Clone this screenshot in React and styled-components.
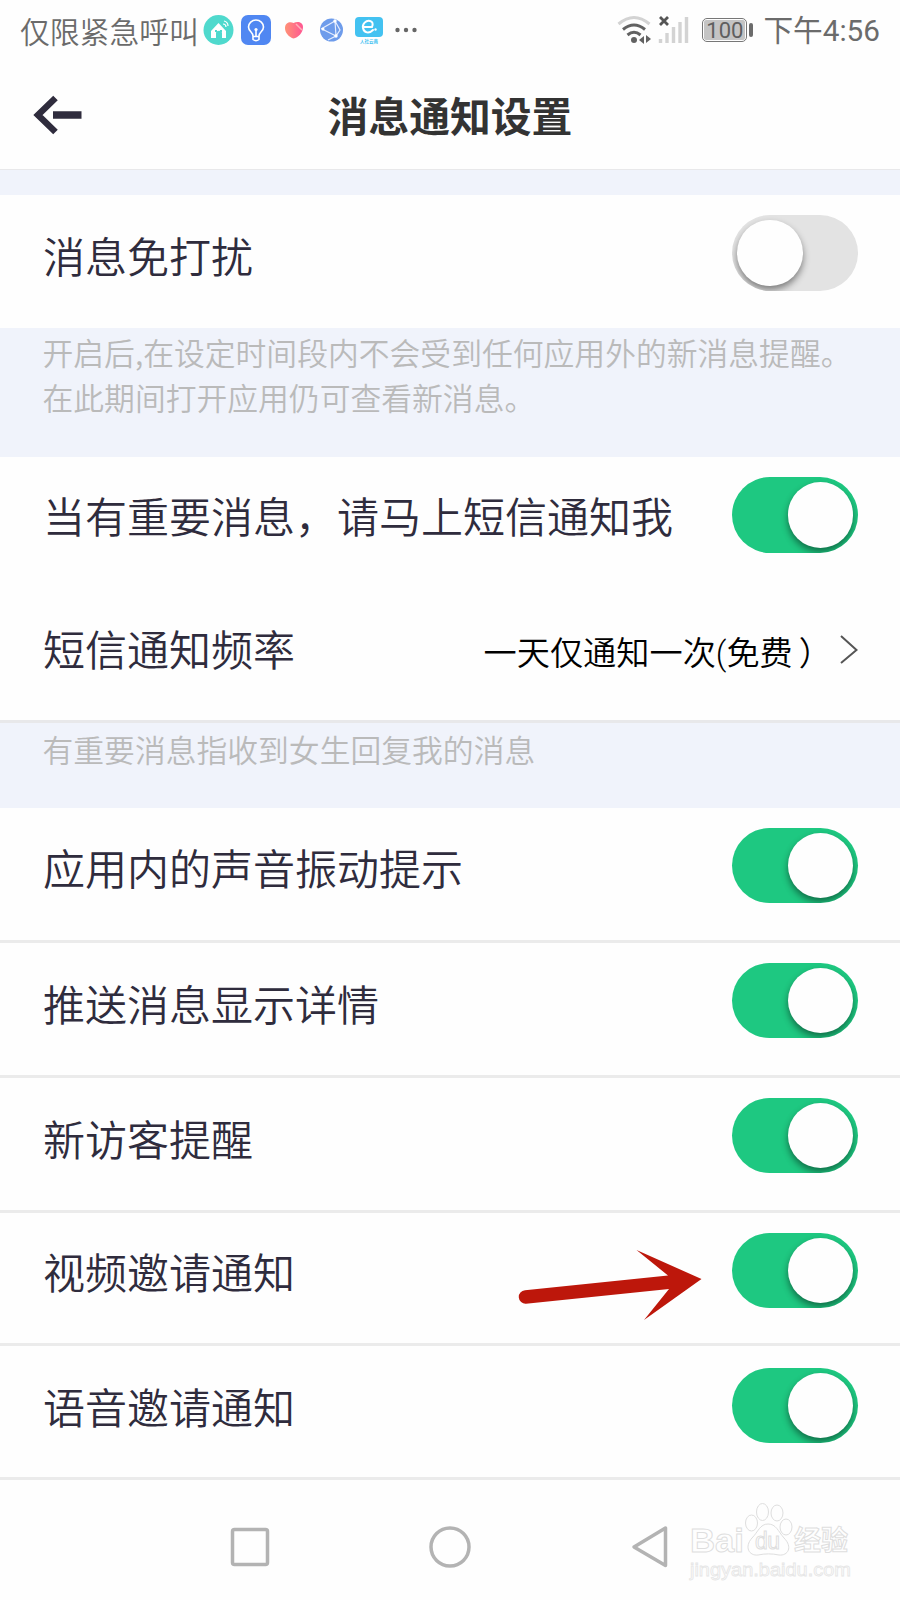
import React from 'react';
import styled, { createGlobalStyle } from 'styled-components';

const GlobalStyle = createGlobalStyle`
	* {
		box-sizing: border-box;
	}

	body {
		margin: 0;
		background-color: #fefefe;
		font-family: Roboto, 'Noto Sans CJK SC', sans-serif;
	}
`;

const Screen = styled.div`
	position: relative;
	display: flex;
	flex-direction: column;
	width: 900px;
	height: 1600px;
	overflow: hidden;
	background-color: #fefefe;
`;

const StatusBar = styled.div`
	display: flex;
	align-items: center;
	justify-content: space-between;
	height: 60px;
	padding: 0 20px;
	color: #6b6b6b;
	font-size: 30px;
	line-height: 60px;
	white-space: nowrap;
`;

const StatusGroup = styled.div`
	display: flex;
	align-items: center;
	height: 60px;
`;

const Carrier = styled.span`
	width: 180px;
	font-size: 29.8px;
	font-family: 'Noto Sans CJK SC', sans-serif;
	font-weight: 350;
`;

const Battery = styled.div`
	display: flex;
	align-items: center;
	margin: 0 10px 0 13px;

	&::after {
		content: '';
		width: 4px;
		height: 14px;
		margin-left: 2px;
		border-radius: 2px;
		background-color: #6b6b6b;
	}
`;

const BatteryLevel = styled.div`
	width: 45px;
	height: 24px;
	padding: 1px;
	border: 1.5px solid #777;
	border-radius: 5px;

	> span {
		display: block;
		height: 20px;
		border-radius: 2px;
		background-color: #c4c4c4;
		color: #5f5f5f;
		font-size: 22px;
		line-height: 21px;
		text-align: center;
	}
`;

const Clock = styled.span`
	padding-top: 2px;
	font-size: 29.7px;
`;

const Header = styled.header`
	display: grid;
	grid-template-columns: 100px 1fr 100px;
	height: 109px;
`;

const BackButton = styled.button`
	display: flex;
	align-items: flex-start;
	padding: 35px 0 0 33px;
	border: 0;
	background: none;
`;

const Title = styled.h1`
	margin: 0;
	color: #333;
	font-family: 'Noto Sans CJK SC', sans-serif;
	font-size: 40.8px;
	font-weight: 700;
	line-height: 110px;
	text-align: center;
`;

const Band = styled.div`
	height: ${({ $height }) => $height}px;
	padding: ${({ $top }) => $top || 0}px 42.5px 0;
	border-top: ${({ $line }) => $line || 0}px solid #e8e8ea;
	background-color: #f0f3fb;
	color: #bababa;
	font-family: 'Noto Sans CJK SC', sans-serif;
	font-size: 30.8px;
	font-weight: 350;
	line-height: 45px;
	white-space: nowrap;
`;

const Row = styled.div`
	display: flex;
	justify-content: space-between;
	align-items: flex-start;
	height: ${({ $height }) => $height}px;
	padding: ${({ $top }) => $top || 20}px 42px 0 43px;
	border-bottom: ${({ $line }) => ($line ? '3px solid #ebebeb' : '0')};
`;

const Label = styled.span`
	padding-top: ${({ $drop }) => $drop || 0}px;
	color: #2f2c3d;
	font-family: 'Noto Sans CJK SC', sans-serif;
	font-size: 42px;
	font-weight: 350;
	line-height: 74px;
	white-space: nowrap;
`;

const Value = styled.span`
	display: flex;
	align-items: center;
	gap: 8px;
	height: 78px;
	color: #000;
	font-family: Roboto, 'Noto Sans CJK SC', sans-serif;
	font-size: 33.2px;
	font-weight: 350;
	white-space: nowrap;
`;

const Bracket = styled.span`
	margin-left: 6px;
`;

const Toggle = styled.button`
	display: flex;
	justify-content: ${({ $on }) => ($on ? 'flex-end' : 'flex-start')};
	width: 126px;
	height: 75.5px;
	padding: 5px;
	border: 0;
	border-radius: 38px;
	overflow: hidden;
	background-color: ${({ $on }) => ($on ? '#1ec881' : '#e3e3e3')};

	&::after {
		content: '';
		width: 65.5px;
		height: 65.5px;
		border-radius: 50%;
		background-color: #fefefe;
		box-shadow: 0 4px 7px rgba(0, 0, 0, 0.45);
	}
`;

const NavBar = styled.nav`
	display: flex;
	flex: 1;
	padding-top: 44px;

	svg {
		display: block;
	}
`;

const NavItem = styled.div`
	padding-left: ${({ $left }) => $left}px;
`;

const Pointer = styled.svg`
	position: absolute;
	left: 510px;
	top: 1240px;
`;

const Watermark = styled.svg`
	position: absolute;
	left: 680px;
	top: 1494px;
`;

const AppIcons = () => (
	<svg width="220" height="60" viewBox="200 0 220 60" fill="none">
		<circle cx="218.500" cy="30" r="15" fill="#4fd9cd" />
		<path d="M211 31l7.500-8 7.500 8v7h-4v-5c0-3-6-3-6 0v5h-5z" fill="#fff" />
		<path d="M215 31h2M220 31h2M218 34v4" stroke="#4fd9cd" strokeWidth="2" />
		<path d="M223 24q3 0 3 3M224 21q4 1 4 5" stroke="#fff" strokeWidth="1.200" />
		<rect x="241" y="15" width="30" height="30" rx="7" fill="#5087f2" />
		<path
			d="M253 36c0-4-4.500-4.500-4.500-9a7.500 7 0 0 1 15 0c0 4.500-4.500 5-4.500 9v3.500q-3 2.500-6 0zM253 36.500h6M256 30v6"
			stroke="#fff"
			strokeWidth="1.600"
		/>
		<circle cx="256" cy="29.500" r="1.600" fill="#fff" />
		<defs>
			<linearGradient id="heart" x1="0" x2="1">
				<stop stopColor="#ff9277" />
				<stop offset="1" stopColor="#ff5692" />
			</linearGradient>
		</defs>
		<path
			d="M293.500 38.500c-4-1-9-6-8.500-11 .5-6 6-6 8.500-4.500 4-2 9.500-1 9.500 4 0 6-5 10.500-9.500 11.500z"
			fill="url(#heart)"
		/>
		<path d="M296 24l6 6" stroke="#ffb0b8" strokeWidth="1.500" />
		<circle cx="331.500" cy="30" r="11.500" fill="#6e9ceb" />
		<path
			d="M321 29l14-8 1 15-14-7M335 21l5 9-4 6-8 4"
			stroke="#e4edff"
			strokeWidth="1.200"
		/>
		<circle cx="335" cy="21" r="1.700" fill="#fff" />
		<circle cx="336" cy="36" r="1.700" fill="#fff" />
		<circle cx="323" cy="29" r="1.500" fill="#fff" />
		<rect x="355" y="17" width="28" height="20" rx="4" fill="#43c2f1" />
		<path
			d="M364 27h8q2-5-2-6c-4-1-8 3-7 7 1 5 6 6 10 2"
			stroke="#fff"
			strokeWidth="2"
			strokeLinecap="round"
		/>
		<circle cx="375.500" cy="29.500" r="1.200" fill="#fff" />
		<text x="360" y="42.500" fill="#43c2f1" fontSize="4.500" fontWeight="700">
			人社云南
		</text>
		<g fill="#666">
			<circle cx="397.500" cy="30" r="2.200" />
			<circle cx="406" cy="30" r="2.200" />
			<circle cx="414.500" cy="30" r="2.200" />
		</g>
	</svg>
);

const SignalIcons = () => (
	<svg width="72" height="60" viewBox="619 0 72 60" fill="none">
		<path d="M620.500 24q15.500-13 31 0" stroke="#d3d3d3" strokeWidth="3" />
		<path d="M625 29.500q11-9 22 0M629.500 35q6.500-5.500 13 0" stroke="#626262" strokeWidth="3" />
		<circle cx="636" cy="40" r="3" fill="#626262" />
		<path d="M646 36v8l-5-4zM648 35v8l5-4z" fill="#626262" />
		<path d="M662 17l8 8M670 17l-8 8" stroke="#555" strokeWidth="2.800" />
		<path
			d="M662.500 39v4M669 33v10M675.500 27v16M682 22v21M688.500 17v26"
			stroke="#d3d3d3"
			strokeWidth="3.400"
		/>
	</svg>
);

const rows = [
	{ label: '应用内的声音振动提示', height: 135.5, top: 20, drop: 2 },
	{ label: '推送消息显示详情', height: 135, top: 19.5, drop: 3 },
	{ label: '新访客提醒', height: 135, top: 19.5, drop: 3 },
	{ label: '视频邀请通知', height: 133, top: 19.5, drop: 1 },
	{ label: '语音邀请通知', height: 134, top: 21.5, drop: 1 },
];

export default () => (
	<>
		<GlobalStyle />
		<Screen>
			<StatusBar>
				<StatusGroup>
					<Carrier>仅限紧急呼叫</Carrier>
					<AppIcons />
				</StatusGroup>
				<StatusGroup>
					<SignalIcons />
					<Battery>
						<BatteryLevel>
							<span>100</span>
						</BatteryLevel>
					</Battery>
					<Clock>下午4:56</Clock>
				</StatusGroup>
			</StatusBar>
			<Header>
				<BackButton aria-label="返回">
					<svg width="49" height="40" viewBox="33 95 49 40" fill="none">
						<path d="M55.500 98L38 115l17.500 17" stroke="#2f2c3d" strokeWidth="6.500" />
						<path d="M53 115h28.500" stroke="#2f2c3d" strokeWidth="7.500" />
					</svg>
				</BackButton>
				<Title>消息通知设置</Title>
			</Header>
			<Band $height={26} $line={1} />
			<Row $height={132.5}>
				<Label $drop={3}>消息免打扰</Label>
				<Toggle aria-label="消息免打扰" />
			</Row>
			<Band $height={129.5} $top={1}>
				开启后,在设定时间段内不会受到任何应用外的新消息提醒。
				<br />
				在此期间打开应用仍可查看新消息。
			</Band>
			<Row $height={135}>
				<Label $drop={1}>当有重要消息，请马上短信通知我</Label>
				<Toggle $on aria-label="短信通知" />
			</Row>
			<Row $height={128} $top={19}>
				<Label>短信通知频率</Label>
				<Value>
					<span>
						一天仅通知一次(免费
						<Bracket>）</Bracket>
					</span>
					<svg width="18" height="30" viewBox="0 0 18 30" fill="none">
						<path d="M1 1l15.500 14L1 28" stroke="#555" strokeWidth="2" />
					</svg>
				</Value>
			</Row>
			<Band $height={87.5} $top={3} $line={3}>
				有重要消息指收到女生回复我的消息
			</Band>
			{rows.map(({ label, height, top, drop }) => (
				<Row key={label} $height={height} $top={top} $line>
					<Label $drop={drop}>{label}</Label>
					<Toggle $on aria-label={label} />
				</Row>
			))}
			<NavBar>
				<NavItem $left={230}>
					<svg width="40" height="46" viewBox="0 0 40 46" fill="none">
						<rect x="2.500" y="5.500" width="35" height="35" rx="2" stroke="#b3b3b3" strokeWidth="3.500" />
					</svg>
				</NavItem>
				<NavItem $left={158}>
					<svg width="44" height="46" viewBox="0 0 44 46" fill="none">
						<circle cx="22" cy="23" r="19" stroke="#b3b3b3" strokeWidth="3.500" />
					</svg>
				</NavItem>
				<NavItem $left={159}>
					<svg width="38" height="46" viewBox="0 0 38 46" fill="none">
						<path
							d="M34.500 4v37.500L3 23z"
							stroke="#b3b3b3"
							strokeWidth="3.500"
							strokeLinejoin="round"
						/>
					</svg>
				</NavItem>
			</NavBar>
			<Pointer width="200" height="90" viewBox="510 1240 200 90">
				<path
					d="M525 1290.300L668 1275.500 636.500 1250 701.500 1279 644 1320 669 1289 526 1303.700A6.700 6.700 0 0 1 525 1290.300z"
					fill="#bd170b"
				/>
			</Pointer>
			<Watermark width="190" height="100" viewBox="680 1494 190 100">
				<g fill="#fefefe" stroke="#dedede" strokeWidth="1">
					<text x="690" y="1552" fontFamily="Liberation Sans" fontWeight="700" fontSize="34" textLength="54" lengthAdjust="spacingAndGlyphs">
						Bai
					</text>
					<ellipse cx="751.500" cy="1523" rx="6" ry="8" />
					<ellipse cx="762.500" cy="1512" rx="6" ry="8.500" />
					<ellipse cx="777" cy="1513" rx="6" ry="8" />
					<ellipse cx="786" cy="1527" rx="6" ry="8" />
					<path d="M768 1524c8 0 10 7 16 14 9 9 4 18-5 17-7-1.500-14-1.500-21 0-9 1-14-8-6-17 6-6 8-14 16-14z" />
					<text x="755" y="1549" fontFamily="Liberation Sans" fontSize="23" textLength="25">
						du
					</text>
					<text x="794" y="1550" fontFamily="Noto Sans CJK SC" fontWeight="700" fontSize="27">
						经验
					</text>
					<text x="690" y="1576" fontFamily="Liberation Sans" fontSize="18" stroke="#e6e6e6" strokeWidth="0.800" textLength="161" lengthAdjust="spacingAndGlyphs">
						jingyan.baidu.com
					</text>
				</g>
			</Watermark>
		</Screen>
	</>
);
